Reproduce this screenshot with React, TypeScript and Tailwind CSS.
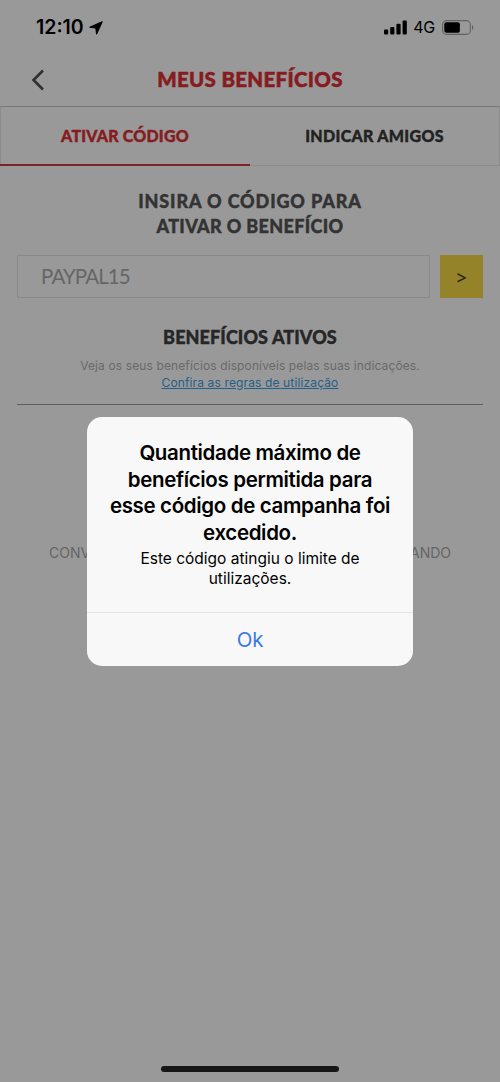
import React from 'react';

function StatusBar() {
  return (
    <div className="flex h-[53px] items-start justify-between pr-[26px] pl-9 pt-[15px] text-black">
      <div className="flex items-center">
        <span className="text-[19.5px] leading-[25px] font-semibold tracking-[0px]">12:10</span>
        <svg width="14" height="14" viewBox="0 0 14 14" className="ml-[5px]" fill="currentColor">
          <path d="M13.2 0.8 L0.8 6.3 L6.8 7 L7.6 13 Z" stroke="currentColor" strokeWidth="1.1" strokeLinejoin="round" />
        </svg>
      </div>
      <div className="flex items-center">
        <svg width="23" height="15" viewBox="0 0 23 15" fill="currentColor">
          <rect x="0" y="9.5" width="4.2" height="5.1" rx="1" />
          <rect x="6.2" y="7" width="4.2" height="7.6" rx="1" />
          <rect x="12.4" y="3.8" width="4.2" height="10.8" rx="1" />
          <rect x="18.6" y="0.6" width="4.2" height="14" rx="1" />
        </svg>
        <span className="ml-[6px] text-[16px] leading-[25px] font-normal tracking-[-0.3px]">4G</span>
        <svg width="32" height="15" viewBox="0 0 32 15" className="ml-[7px]">
          <rect x="0.6" y="0.6" width="27.8" height="13.8" rx="4" fill="none" stroke="#626262" strokeWidth="1.1" />
          <rect x="2.3" y="2.3" width="15.6" height="10.4" rx="2" fill="#000" />
          <path d="M30 5 C31.8 5.8 31.8 9.2 30 10 Z" fill="#626262" />
        </svg>
      </div>
    </div>
  );
}

function Alert() {
  return (
    <div className="absolute top-[417px] left-[87px] flex h-[248.5px] w-[326px] flex-col rounded-[15px] bg-[#f8f8f8] text-center text-black">
      <div className="flex h-[196px] flex-col border-b border-[#e4e4e4] pt-[23px]">
        <h2 className="text-[20.5px] leading-[26.5px] font-semibold tracking-[-0.35px] whitespace-nowrap">
          <span className="block">Quantidade máximo de</span>
          <span className="block">benefícios permitida para</span>
          <span className="block">esse código de campanha foi</span>
          <span className="block">excedido.</span>
        </h2>
        <p className="mt-[3px] text-[15.5px] leading-[19.5px] tracking-[0px]">
          Este código atingiu o limite de
          <br />
          utilizações.
        </p>
      </div>
      <button className="flex-1 pt-[2px] text-[20.5px] tracking-[-0.3px] text-[#3b78e4]">Ok</button>
    </div>
  );
}

export default function App() {
  return (
    <div className="relative flex h-[1082px] w-[500px] flex-col overflow-hidden bg-[#999999] font-['Inter',sans-serif]">
      <StatusBar />
      <header className="grid h-[53px] grid-cols-[60px_1fr_60px] items-center">
        <svg width="14" height="22" viewBox="0 0 14 22" className="ml-[31px]" fill="none" stroke="#303030" strokeWidth="2.6">
          <path d="M12 1.5 L2.5 11 L12 20.5" />
        </svg>
        <h1 className="-mt-[2px] text-center font-['Lato',sans-serif] text-[20.5px] leading-[26px] font-black tracking-[0.3px] text-[#861c20] [-webkit-text-stroke:0.5px]">
          MEUS BENEFÍCIOS
        </h1>
      </header>

      <nav className="flex h-[60px] border-x border-t border-[#8c8c8c] border-t-[#777777] font-['Lato',sans-serif] text-[16px] font-black [-webkit-text-stroke:0.4px]">
        <div className="-ml-px flex w-[250px] items-center justify-center border-b-2 border-[#7f2129] text-[#861c20]">
          <span className="tracking-[0.2px]">ATIVAR CÓDIGO</span>
        </div>
        <div className="flex flex-1 items-center justify-center border-b border-[#8c8c8c] text-[#222222]">
          <span className="tracking-[0.3px]">INDICAR AMIGOS</span>
        </div>
      </nav>

      <h2 className="mt-[23px] text-center font-['Lato',sans-serif] text-[18px] leading-[24.5px] font-black text-[#333333] [-webkit-text-stroke:0.4px]">
        <span className="block tracking-[0.87px]">INSIRA O CÓDIGO PARA</span>
        <span className="block tracking-[0.35px]">ATIVAR O BENEFÍCIO</span>
      </h2>

      <div className="mx-[17px] mt-[17px] flex h-[43px] gap-[10px]">
        <div className="flex flex-1 items-center border border-[#898989] pl-[23px] font-['Lato',sans-serif] text-[20.5px] tracking-[-0.9px] text-[#666666]">
          PAYPAL15
        </div>
        <button className="w-[43px] bg-[#95832a] font-['Lato',sans-serif] text-[22px] text-[#2b2815]">&gt;</button>
      </div>

      <h3 className="mt-[26px] text-center font-['Lato',sans-serif] text-[18px] leading-[26px] font-black tracking-[0.1px] text-[#262626] [-webkit-text-stroke:0.4px]">
        BENEFÍCIOS ATIVOS
      </h3>
      <p className="mt-[8px] text-center text-[12px] leading-[16.5px] tracking-[0.12px] text-[#696969]">
        Veja os seus benefícios disponíveis pelas suas indicações.
      </p>
      <a className="text-center text-[12px] leading-[16.5px] tracking-[0.13px] text-[#235f88] underline">
        Confira as regras de utilização
      </a>
      <div className="mx-[17px] mt-[13px] border-t border-[#5f5f5f]" />

      <div className="mt-[138px] flex justify-between pr-[49px] pl-[49px] text-[14px] leading-[20px] text-[#656565]">
        <span>CONV</span>
        <span>ANDO</span>
      </div>

      <Alert />

      <div className="mx-auto mt-auto mb-[10px] h-[6px] w-[178px] rounded-full bg-[#161616]" />
    </div>
  );
}
